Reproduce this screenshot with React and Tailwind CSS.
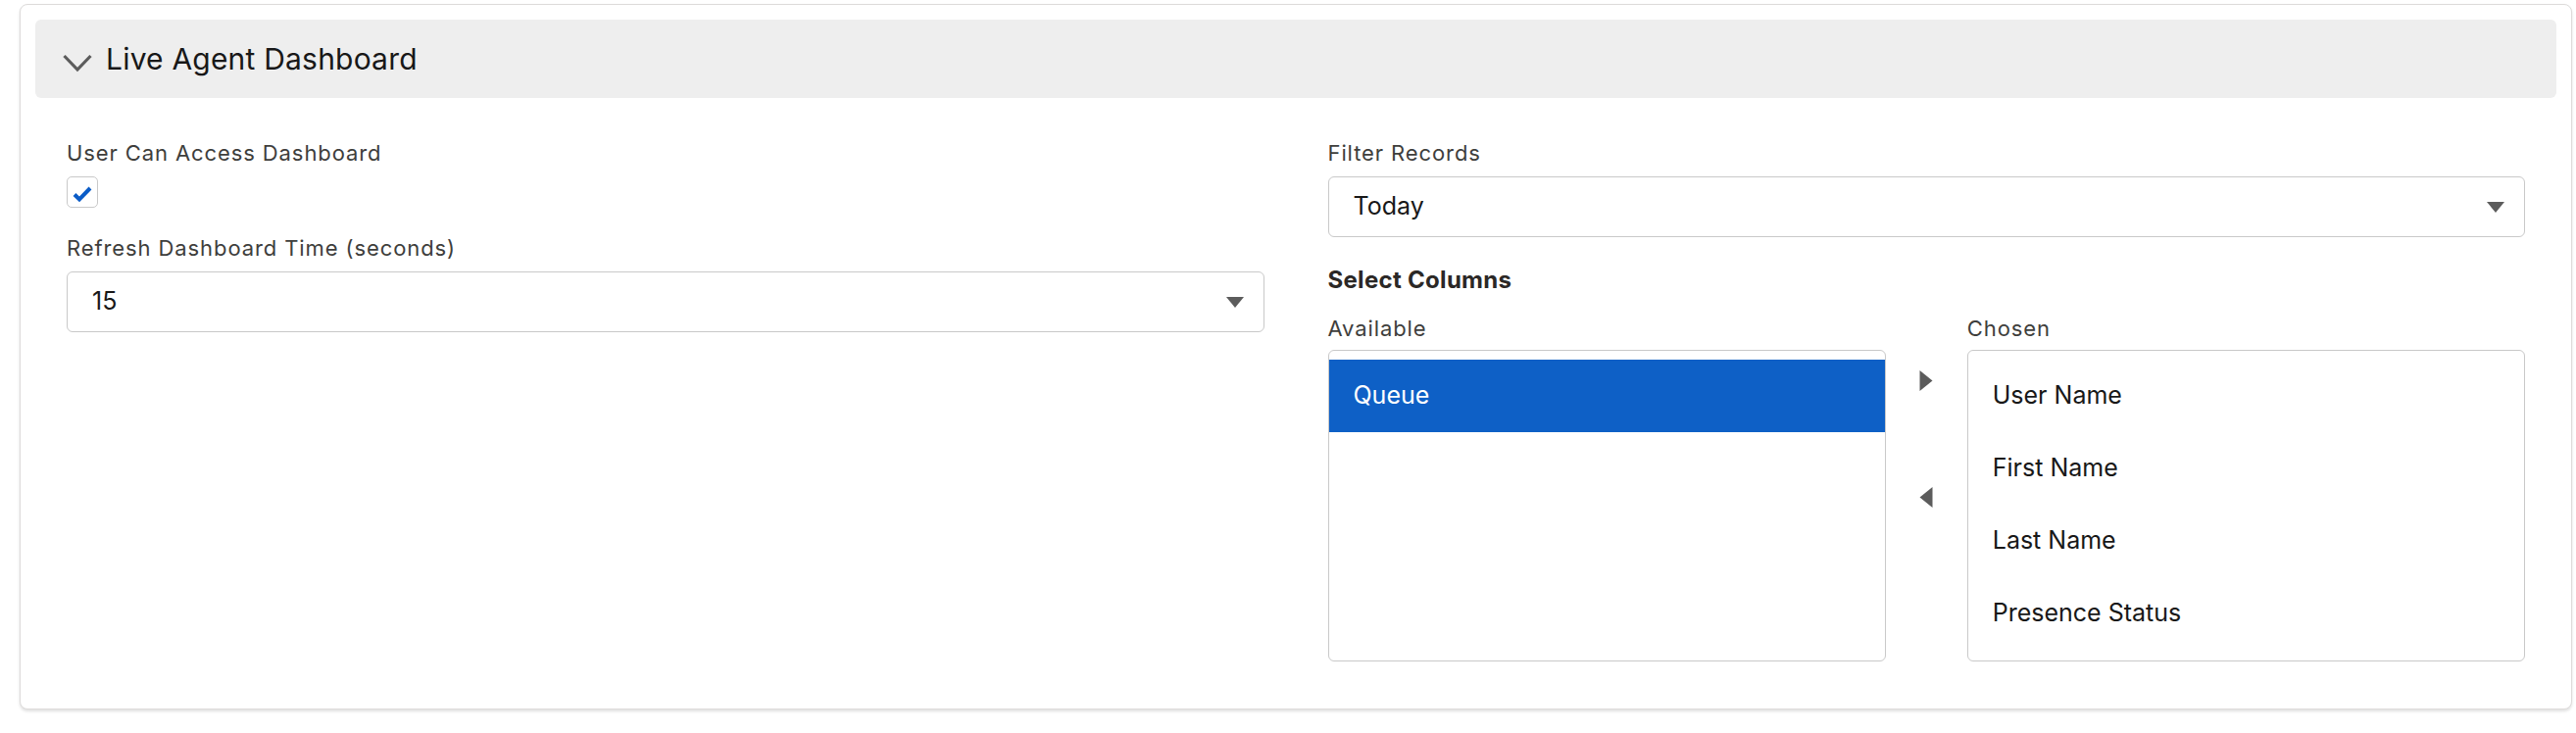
import React from "react";

function Label({ children, className = "" }) {
  return (
    <div className={"h-[32px] text-[22px] leading-[32px] tracking-[0.9px] text-[#3e3e3c] " + className}>
      {children}
    </div>
  );
}

function SelectBox({ value }) {
  return (
    <div className="flex h-[62px] items-center justify-between rounded-[6px] border border-[#c9c9c9] bg-white pl-[25px] pr-[20px]">
      <span className="text-[25px] text-[#181818]">{value}</span>
      <svg width="18" height="11" viewBox="0 0 18 11">
        <path d="M0 0 L18 0 L9 11 Z" fill="#5c5c5c" />
      </svg>
    </div>
  );
}

function ListItem({ children, selected }) {
  return (
    <div
      className={
        "flex h-[74px] items-center pl-[25px] text-[25px] " +
        (selected ? "bg-[#0e60c6] text-white" : "text-[#181818]")
      }
    >
      {children}
    </div>
  );
}

export default function App() {
  return (
    <div className="min-h-[748px] bg-white pl-[20px] pr-[4px] pt-[4px] font-['Inter',sans-serif]">
      <div className="h-[720px] rounded-[8px] border border-[#dddbda] bg-white px-[15px] pt-[15px] shadow-[0_2px_3px_rgba(0,0,0,0.12)]">
        <div className="flex h-[80px] items-center rounded-[6px] bg-[#eeeeee] pl-[28px]">
          <svg width="30" height="20" viewBox="0 0 30 20" className="mt-[10px] mr-[14px]">
            <polyline points="1.5,2 15,16 28.5,2" fill="none" stroke="#5c5c5c" strokeWidth="3.2" />
          </svg>
          <span className="text-[30px] leading-none tracking-[0.2px] text-[#181818]">Live Agent Dashboard</span>
        </div>

        <div className="grid grid-cols-2 gap-x-[65px] px-[32px] pt-[40px]">
          <div className="flex flex-col">
            <Label>User Can Access Dashboard</Label>
            <div className="mt-[8px] flex h-[32px] w-[32px] items-center justify-center rounded-[5px] border border-[#c9c9c9] bg-white">
              <svg width="30" height="30" viewBox="0 0 30 30">
                <polyline points="7,17.5 12,22.5 23,11" fill="none" stroke="#0b5cc7" strokeWidth="4" strokeLinejoin="miter" />
              </svg>
            </div>
            <Label className="mt-[25px]">Refresh Dashboard Time (seconds)</Label>
            <div className="mt-[8px]">
              <SelectBox value="15" />
            </div>
          </div>

          <div className="flex flex-col">
            <Label>Filter Records</Label>
            <div className="mt-[8px]">
              <SelectBox value="Today" />
            </div>
            <div className="mt-[28px] h-[32px] text-[24px] font-bold leading-[32px] tracking-[0.3px] text-[#2b2826]">
              Select Columns
            </div>
            <div className="mt-[17px] grid grid-cols-[1fr_83px_1fr]">
              <div className="flex flex-col">
                <Label>Available</Label>
                <div className="mt-[6px] h-[318px] rounded-[6px] border border-[#c9c9c9] bg-white pt-[9px]">
                  <ListItem selected>Queue</ListItem>
                </div>
              </div>
              <div className="flex flex-col items-center pt-[59px]">
                <svg width="14" height="21" viewBox="0 0 14 21">
                  <path d="M0.5 0 L13.5 10.5 L0.5 21 Z" fill="#5c5c5c" />
                </svg>
                <svg width="14" height="21" viewBox="0 0 14 21" className="mt-[98px]">
                  <path d="M13.5 0 L0.5 10.5 L13.5 21 Z" fill="#5c5c5c" />
                </svg>
              </div>
              <div className="flex flex-col">
                <Label>Chosen</Label>
                <div className="mt-[6px] h-[318px] rounded-[6px] border border-[#c9c9c9] bg-white pt-[9px]">
                  <ListItem>User Name</ListItem>
                  <ListItem>First Name</ListItem>
                  <ListItem>Last Name</ListItem>
                  <ListItem>Presence Status</ListItem>
                </div>
              </div>
            </div>
          </div>
        </div>
      </div>
    </div>
  );
}
